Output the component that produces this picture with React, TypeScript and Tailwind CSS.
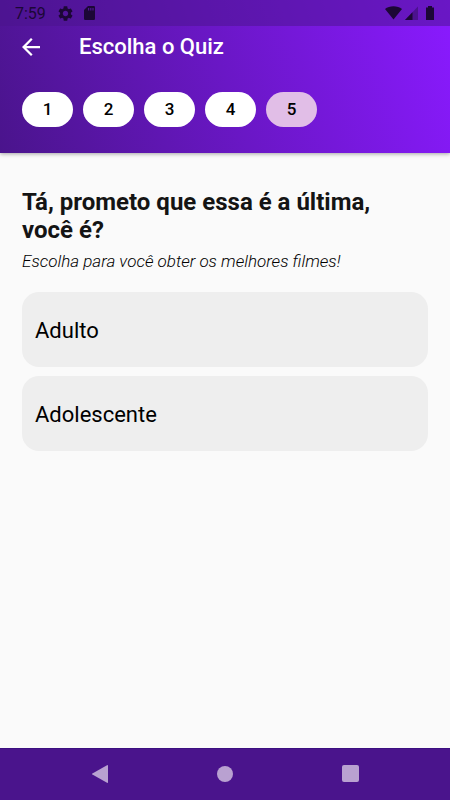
import React, { useState } from 'react';

// ==========================================
// Data
// ==========================================

const steps = [1, 2, 3, 4, 5];
const options = ['Adulto', 'Adolescente'];

// ==========================================
// System bars
// ==========================================

const StatusBar: React.FC = () => (
  <div className="flex h-[26px] items-center justify-between bg-[#4a148c]/50 pl-[15px] pr-4 text-[#1c0736]">
    <div className="flex items-center">
      <span className="w-[43px] pt-0.5 text-base leading-none">7:59</span>
      <svg className="h-[15px] w-[15px]" viewBox="2 2 20 20" fill="currentColor" aria-hidden="true">
        <path d="M19.14 12.94c.04-.3.06-.61.06-.94 0-.32-.02-.64-.07-.94l2.03-1.58c.18-.14.23-.41.12-.61l-1.92-3.32c-.12-.22-.37-.29-.59-.22l-2.39.96c-.5-.38-1.03-.7-1.62-.94l-.36-2.54c-.04-.24-.24-.41-.48-.41h-3.84c-.24 0-.43.17-.47.41l-.36 2.54c-.59.24-1.13.57-1.62.94l-2.39-.96c-.22-.08-.47 0-.59.22L2.74 8.87c-.12.21-.08.47.12.61l2.03 1.58c-.05.3-.09.63-.09.94s.02.64.07.94l-2.03 1.58c-.18.14-.23.41-.12.61l1.92 3.32c.12.22.37.29.59.22l2.39-.96c.5.38 1.03.7 1.62.94l.36 2.54c.05.24.24.41.48.41h3.84c.24 0 .44-.17.47-.41l.36-2.54c.59-.24 1.13-.56 1.62-.94l2.39.96c.22.08.47 0 .59-.22l1.92-3.32c.12-.22.07-.47-.12-.61l-2.01-1.58zM12 15.6c-1.98 0-3.6-1.62-3.6-3.6s1.62-3.6 3.6-3.6 3.6 1.62 3.6 3.6-1.62 3.6-3.6 3.6z" />
      </svg>
      <svg className="ml-[11px] h-[14px] w-[11px]" viewBox="0 0 11 14" aria-hidden="true">
        <path fill="currentColor" d="M4 0h5.7A1.3 1.3 0 0 1 11 1.300v11.400A1.300 1.300 0 0 1 9.700 14H1.300A1.300 1.300 0 0 1 0 12.700V4z" />
        <path fill="#4f1694" d="M4 2h1.200v2.600H4zM6.200 2h1.200v2.600H6.200zM8.400 2h1.200v2.600H8.400z" />
      </svg>
    </div>
    <div className="flex items-center">
      <svg className="h-[14px] w-[17px]" viewBox="0 0 17 14" fill="currentColor" aria-hidden="true">
        <path d="M8.500 13.500L0 3C2.300 1.200 5.200.2 8.500.2S14.700 1.200 17 3z" />
      </svg>
      <svg className="ml-[3px] h-[14px] w-[13px]" viewBox="0 0 13 14" aria-hidden="true">
        <path fill="#4c128f" d="M13 .5V14H0z" />
        <path fill="currentColor" d="M7.500 6.200V14H0z" />
      </svg>
      <svg className="ml-2 h-[14px] w-2" viewBox="0 0 8 14" fill="currentColor" aria-hidden="true">
        <path d="M2 0h4v1.400H8V14H0V1.400h2z" />
      </svg>
    </div>
  </div>
);

const NavigationBar: React.FC = () => (
  <nav className="flex h-[52px] items-center justify-center gap-[105px] border-t border-[#3c1080] bg-[#4a148c] pb-0.5 text-[#b9a1d1]">
    <button type="button" aria-label="Voltar" className="flex w-5 justify-center">
      <svg className="h-[18px] w-4" viewBox="0 0 16 18" fill="currentColor">
        <path d="M15 .2a.7.7 0 0 1 1 .6v16.400a.7.7 0 0 1-1 .6L.4 9.600a.7.7 0 0 1 0-1.200z" />
      </svg>
    </button>
    <button type="button" aria-label="Início" className="flex w-5 justify-center">
      <span className="h-4 w-4 rounded-full bg-[#b9a1d1]" />
    </button>
    <button type="button" aria-label="Recentes" className="flex w-5 justify-center">
      <span className="h-[17px] w-[17px] rounded-xs bg-[#b9a1d1]" />
    </button>
  </nav>
);

// ==========================================
// Quiz
// ==========================================

const StepPill: React.FC<{ step: number; active: boolean }> = ({ step, active }) => (
  <li
    aria-current={active ? 'step' : undefined}
    className={`flex h-[35px] w-[51px] items-center justify-center rounded-full text-[17px] font-medium text-black ${active ? 'bg-[#e1bee7]' : 'bg-white'}`}
  >
    {step}
  </li>
);

const App: React.FC = () => {
  const [selected, setSelected] = useState<string | null>(null);

  return (
    <div className="flex min-h-screen flex-col bg-[#fafafa] font-[Roboto,sans-serif]">
      <header className="bg-[linear-gradient(71deg,#4a148c,#8a1aff)] pb-[26px] shadow-[0_1px_4px_rgba(0,0,0,0.35)]">
        <StatusBar />
        <div className="flex h-[42px] items-center px-[22px] text-white">
          <button type="button" aria-label="Voltar" className="w-[57px]">
            <svg className="h-[18px] w-[18px]" viewBox="4 4 16 16" fill="currentColor">
              <path d="M20 11H7.830l5.590-5.590L12 4l-8 8 8 8 1.410-1.410L7.830 13H20v-2z" />
            </svg>
          </button>
          <h1 className="text-[22px] font-medium leading-[26px]">Escolha o Quiz</h1>
        </div>
        <ol className="mt-6 flex gap-2.5 px-[22px]">
          {steps.map(step => (
            <StepPill key={step} step={step} active={step === 5} />
          ))}
        </ol>
      </header>

      <main className="flex-1 px-[22px] pt-[35px]">
        <h2 className="pr-8 text-2xl font-bold leading-7 text-[#141414]">Tá, prometo que essa é a última, você é?</h2>
        <p className="mt-[7px] text-[17px] font-light italic leading-5 text-black">Escolha para você obter os melhores filmes!</p>
        <div className="mt-[21px] flex flex-col gap-[9px]">
          {options.map(option => (
            <button
              key={option}
              type="button"
              aria-pressed={selected === option}
              onClick={() => setSelected(option)}
              className="h-[75px] rounded-[17px] bg-[#eeeeee] px-[13px] pt-0.5 text-left text-[22px] text-black"
            >
              {option}
            </button>
          ))}
        </div>
      </main>

      <NavigationBar />
    </div>
  );
};

export default App;
